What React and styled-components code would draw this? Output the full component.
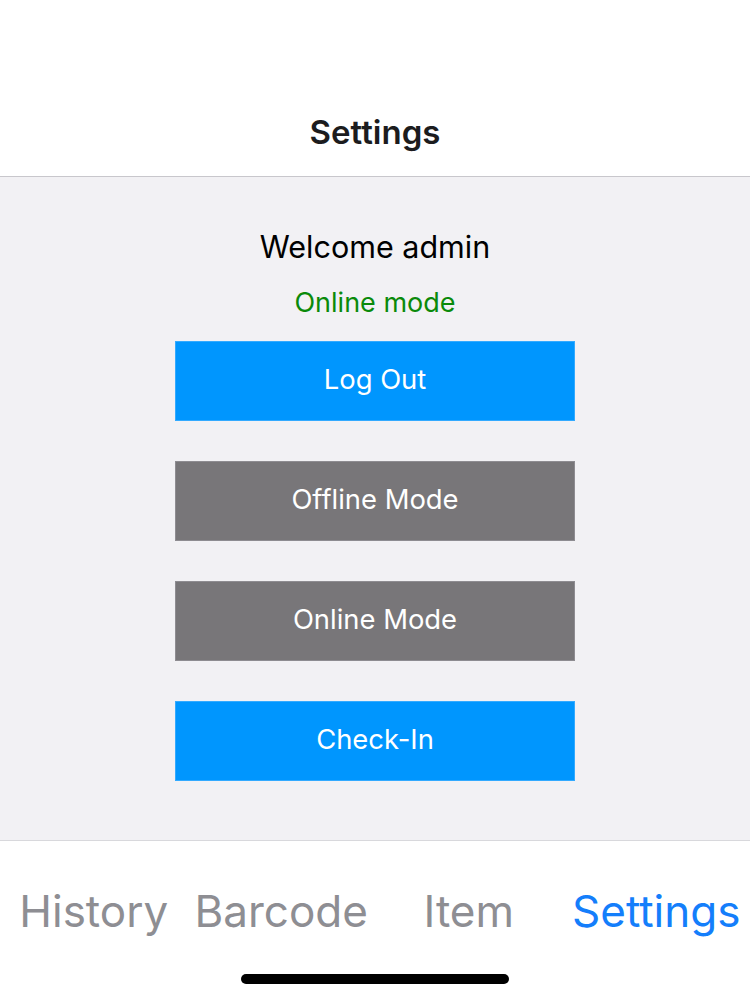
import React from 'react';
import styled, { createGlobalStyle } from 'styled-components';

const GlobalStyle = createGlobalStyle`
  html, body {
    margin: 0;
    padding: 0;
    background: #ffffff;
    font-family: Inter, 'Noto Sans', 'Liberation Sans', sans-serif;
  }
`;

const Screen = styled.div`
  width: 750px;
  height: 1000px;
  display: flex;
  flex-direction: column;
  overflow: hidden;
`;

const Header = styled.header`
  height: 177px;
  flex-shrink: 0;
  background: #ffffff;
  border-bottom: 1px solid #c8c7cc;
  display: flex;
  align-items: flex-end;
  justify-content: center;
  padding-bottom: 24px;
  box-sizing: border-box;
`;

const Title = styled.h1`
  margin: 0;
  font-size: 33px;
  line-height: 40px;
  font-weight: 600;
  color: #1c1c1e;
`;

const Content = styled.main`
  flex: 1;
  background: #f2f1f4;
  border-bottom: 1px solid #d8d8dc;
  display: flex;
  flex-direction: column;
  align-items: center;
  padding-top: 52px;
`;

const Welcome = styled.p`
  margin: 0;
  font-size: 30.5px;
  line-height: 36px;
  color: #000000;
`;

const Status = styled.p`
  margin: 22px 0 22px;
  font-size: 27px;
  line-height: 32px;
  color: #0a8a0a;
`;

const Buttons = styled.div`
  display: flex;
  flex-direction: column;
  gap: 40px;
`;

const Button = styled.button`
  width: 400px;
  height: 80px;
  padding: 0 0 4px;
  border: 1px solid ${p => (p.$primary ? '#33aaff' : '#8e8c91')};
  background: ${p => (p.$primary ? '#0096fe' : '#787679')};
  color: #ffffff;
  font-family: inherit;
  font-size: 27.4px;
  cursor: pointer;
`;

const TabBar = styled.nav`
  height: 159px;
  flex-shrink: 0;
  background: #ffffff;
  display: flex;
  flex-direction: column;
  align-items: center;
  padding-top: 42px;
  box-sizing: border-box;
`;

const Tabs = styled.div`
  width: 100%;
  display: grid;
  grid-template-columns: repeat(4, 1fr);
`;

const Tab = styled.span`
  text-align: center;
  font-size: 44px;
  line-height: 56px;
  white-space: nowrap;
  color: ${p => (p.$active ? '#147efb' : '#8e8e93')};
`;

const HomeIndicator = styled.div`
  margin-top: 35px;
  width: 268px;
  height: 10px;
  border-radius: 5px;
  background: #000000;
`;

const tabs = ['History', 'Barcode', 'Item', 'Settings'];

export default function App() {
  return (
    <Screen>
      <GlobalStyle />
      <Header>
        <Title>Settings</Title>
      </Header>
      <Content>
        <Welcome>Welcome admin</Welcome>
        <Status>Online mode</Status>
        <Buttons>
          <Button $primary>Log Out</Button>
          <Button>Offline Mode</Button>
          <Button>Online Mode</Button>
          <Button $primary>Check-In</Button>
        </Buttons>
      </Content>
      <TabBar>
        <Tabs>
          {tabs.map(t => (
            <Tab key={t} $active={t === 'Settings'}>{t}</Tab>
          ))}
        </Tabs>
        <HomeIndicator />
      </TabBar>
    </Screen>
  );
}
